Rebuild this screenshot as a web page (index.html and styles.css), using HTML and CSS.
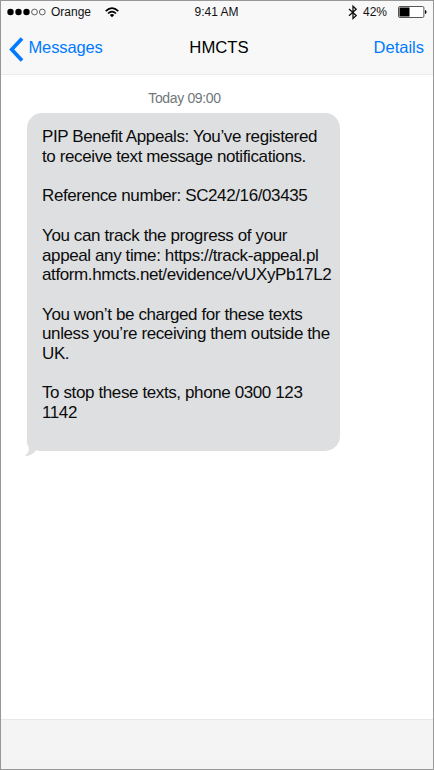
FILE: index.html
```html
<!DOCTYPE html>
<html lang="en">
<head>
<meta charset="utf-8">
<title>HMCTS</title>
<link rel="stylesheet" href="styles.css">
</head>
<body>
<div class="phone">
  <header class="top">
    <div class="status">
      <div class="status-left">
        <svg class="signal" width="40" height="8" viewBox="0 0 40 8"><circle cx="3.5" cy="4" r="3.2"/><circle cx="11.5" cy="4" r="3.2"/><circle cx="19.5" cy="4" r="3.2"/><g fill="none" stroke="#222" stroke-width=".7"><circle cx="27.5" cy="4" r="2.9"/><circle cx="35.3" cy="4" r="2.9"/></g></svg>
        <span class="carrier">Orange</span>
        <svg class="wifi" width="14" height="11" viewBox="0 0 14 11"><g fill="none" stroke="#000" stroke-width="1.7"><path d="M.7 4.1Q7-1.9 13.3 4.1"/><path d="M3 6.5Q7 2.8 11 6.5"/></g><path d="M4.8 8Q7 6.1 9.2 8L7 10.3Z"/></svg>
      </div>
      <span class="clock">9:41 AM</span>
      <div class="status-right">
        <svg class="bluetooth" width="10" height="15" viewBox="0 0 10 15"><path d="M1 4L8.2 10.6L5 13.5V1.2L8.2 4.2L1 10.8" fill="none" stroke="#111" stroke-width="1.3"/></svg>
        <span class="percent">42%</span>
        <svg class="battery" width="29" height="12" viewBox="0 0 29 12"><rect x=".5" y=".5" width="25.4" height="11" rx="1.4" fill="#fff" stroke="#555"/><path d="M1.5 1.5H11.5V10.5H1.5ZM27 4Q28.6 4.3 28.6 6T27 8Z"/></svg>
      </div>
    </div>
    <nav class="nav">
      <a class="back"><svg class="chevron" width="15" height="25" viewBox="0 0 15 25"><path d="M13 1.4L2.7 12.5L13 23.6" fill="none" stroke="#007aff" stroke-width="3.7"/></svg><span>Messages</span></a>
      <h1 class="title">HMCTS</h1>
      <a class="details">Details</a>
    </nav>
  </header>
  <main class="thread">
    <time class="date">Today 09:00</time>
    <div class="bubble">
      <p>PIP Benefit Appeals: You’ve registered<br>to receive text message notifications.</p>
      <p>Reference number: SC242/16/03435</p>
      <p>You can track the progress of your<br>appeal any time: https://track-appeal.pl<br>atform.hmcts.net/evidence/vUXyPb17L2</p>
      <p>You won’t be charged for these texts<br>unless you’re receiving them outside the<br>UK.</p>
      <p>To stop these texts, phone 0300 123<br>1142</p>
      <svg class="tail" width="18" height="22" viewBox="0 0 18 22"><path d="M2 0V7Q2 10 3.8 12.5Q4.5 17 0 20.8Q6 21.8 11 15.2Q13 16 18 16V0Z" fill="#dedfe1"/></svg>
    </div>
  </main>
  <footer class="bottom"></footer>
</div>
</body>
</html>
```
FILE: styles.css
```css
* { box-sizing: border-box; margin: 0; }
body { font-family: "Liberation Sans", Arial, sans-serif; background: #fff; }
svg { display: block; flex: none; }
.phone { width: 434px; height: 770px; border: 1px solid #979797; display: flex; flex-direction: column; }
.top { height: 74px; flex: none; background: #f8f8f8; border-bottom: 1px solid #ececec; }
.status { height: 21px; display: grid; grid-template-columns: 1fr auto 1fr; font-size: 12px; line-height: 21px; color: #111; }
.status-left, .status-right { display: flex; align-items: center; }
.status-left { padding-left: 5.5px; }
.carrier { margin-left: 4.5px; width: 40px; }
.wifi { margin-left: 13.5px; }
.clock { padding-top: 1px; margin: 0 .5px 0 -.5px; }
.status-right { justify-content: flex-end; padding-right: 6px; }
.percent { margin-left: 5px; width: 24px; margin-right: 11px; padding-top: 1px; }
.nav { display: grid; grid-template-columns: 1fr auto 1fr; height: 51px; font-size: 16.5px; line-height: 51px; color: #007aff; }
.back { display: flex; padding-left: 8px; letter-spacing: -.12px; }
.chevron { margin: 15px 4.5px 0 0; }
.title { font-size: 16.7px; font-weight: 400; color: #000; margin: 0 -2px 0 2px; }
.details { text-align: right; padding-right: 9px; }
.thread { flex: 1; padding-left: 26px; }
.date { display: block; width: 315px; padding-top: 14px; height: 38px; text-align: center; font-size: 14px; letter-spacing: -.35px; line-height: 19px; color: #6f777b; }
.bubble { position: relative; width: 313px; height: 338px; border-radius: 15px; background: #dedfe1; padding: 14.4px 0 0 15px; font-size: 17px; letter-spacing: -.39px; line-height: 19.7px; color: #0b0c0c; white-space: nowrap; }
.bubble p + p { margin-top: 19.7px; }
.tail { position: absolute; left: -2px; bottom: -6px; }
.bottom { height: 50px; flex: none; background: #f4f4f4; border-top: 1px solid #e8e8e8; }
```
